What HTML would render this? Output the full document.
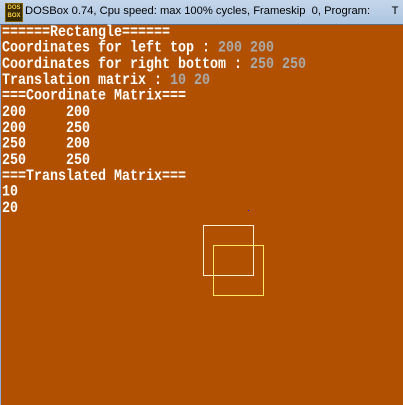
<!DOCTYPE html>
<html><head><style>
html,body{margin:0;padding:0;width:403px;height:405px;overflow:hidden;background:#b05000}
#title{position:absolute;left:0;top:0;width:403px;height:24px;background:linear-gradient(#c4d6ea,#aec6e2);border-bottom:1px solid #5a6f8a;overflow:hidden}
#icon{position:absolute;left:5px;top:3px;width:16px;height:17px;background:#3a2a00;border:1px solid #806000;color:#f8d040;font:bold 6px "Liberation Sans",sans-serif;line-height:8px;text-align:center}
#tt{position:absolute;left:25px;top:5px;font:11.2px "Liberation Sans",sans-serif;color:#000;white-space:pre}
#lb{position:absolute;left:0;top:25px;width:1px;height:380px;background:#8fb0d8}
#c{position:absolute;left:2px;top:25px;font:bold 13.33px/13.333px "Liberation Mono",monospace;color:#fff;white-space:pre;transform:scaleY(1.2);transform-origin:0 0}
.g{color:#aaa}
.r{position:absolute;box-sizing:border-box;width:51px;height:51px}
</style></head><body>
<div id="title"><div id="icon">DOS<br>BOX</div><div id="tt">DOSBox 0.74, Cpu speed: max 100% cycles, Frameskip  0, Program:       T</div></div>
<div id="lb"></div>
<div id="c">======Rectangle======
Coordinates for left top : <span class="g">200 200</span>
Coordinates for right bottom : <span class="g">250 250</span>
Translation matrix : <span class="g">10 20</span>
===Coordinate Matrix===
200     200
200     250
250     200
250     250
===Translated Matrix===
10
20</div>
<div class="r" style="left:203px;top:225px;border:1px solid #fff0d0"></div>
<div class="r" style="left:213px;top:245px;border:1px solid #ffe860"></div>
<div style="position:absolute;left:248px;top:210px;width:1px;height:1px;background:#00f"></div>
</body></html>
